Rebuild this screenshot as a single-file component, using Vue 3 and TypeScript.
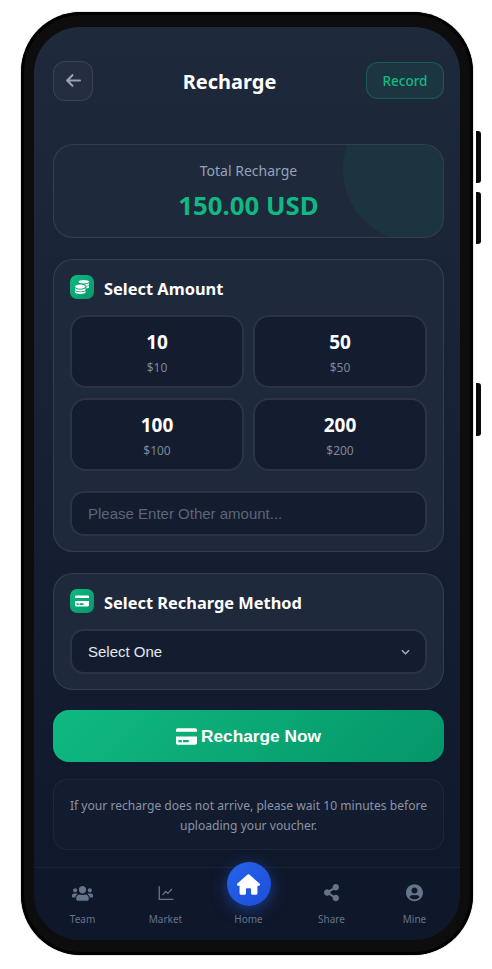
<template>
  <div class="page">
    <div class="phone">
      <span class="side side-1"></span>
      <span class="side side-2"></span>
      <span class="side side-3"></span>

      <div class="screen">
        <main class="content">
          <header class="top">
            <button class="back" type="button" aria-label="Back">
              <svg viewBox="0 0 448 512" class="back-icon"><path :d="paths.arrow" /></svg>
            </button>
            <h1 class="title">Recharge</h1>
            <button class="record" type="button">Record</button>
          </header>

          <section class="total">
            <span class="total-circle"></span>
            <div class="total-label">Total Recharge</div>
            <div class="total-value">150.00 USD</div>
          </section>

          <section class="card">
            <div class="card-head">
              <span class="badge"><svg viewBox="0 0 512 512"><path :d="paths.coins" /></svg></span>
              <h2>Select Amount</h2>
            </div>
            <div class="amounts">
              <button v-for="a in amounts" :key="a" class="amount" type="button">
                <span class="amount-num">{{ a }}</span>
                <span class="amount-usd">${{ a }}</span>
              </button>
            </div>
            <input class="field other" type="text" placeholder="Please Enter Other amount..." />
          </section>

          <section class="card method">
            <div class="card-head">
              <span class="badge"><svg viewBox="0 0 576 512"><path :d="paths.card" /></svg></span>
              <h2>Select Recharge Method</h2>
            </div>
            <div class="select-wrap">
              <select class="field select">
                <option>Select One</option>
              </select>
              <svg class="chevron" viewBox="0 0 10 6"><path d="M1 1l4 4 4-4" /></svg>
            </div>
          </section>

          <button class="submit" type="button">
            <svg viewBox="0 0 576 512"><path :d="paths.card" /></svg>
            <span>Recharge Now</span>
          </button>

          <p class="note">If your recharge does not arrive, please wait 10 minutes before uploading your voucher.</p>
        </main>

        <nav class="nav">
          <a v-for="item in nav" :key="item.label" class="nav-item" :class="{ active: item.active }">
            <span v-if="item.active" class="home-btn">
              <svg :viewBox="item.box"><path :d="item.d" /></svg>
            </span>
            <span v-else class="nav-icon">
              <svg v-if="item.d" :viewBox="item.box" :style="{ width: item.w + 'px' }"><path :d="item.d" /></svg>
              <svg v-else viewBox="0 0 24 24" class="chart">
                <path d="M3 3v17.5h19" />
                <path d="M7.5 14.5l4-4.5 3 2.5 5.5-6" />
              </svg>
            </span>
            <span class="nav-label">{{ item.label }}</span>
          </a>
        </nav>
      </div>
    </div>
  </div>
</template>

<script setup lang="ts">
const paths = {
  arrow:
    'M9.4 233.4c-12.5 12.5-12.5 32.8 0 45.3l160 160c12.5 12.5 32.8 12.5 45.3 0s12.5-32.8 0-45.3L109.2 288 416 288c17.7 0 32-14.3 32-32s-14.3-32-32-32l-306.7 0L214.6 118.6c12.5-12.5 12.5-32.8 0-45.3s-32.8-12.5-45.3 0l-160 160z',
  coins:
    'M0 405.3V448c0 35.3 86 64 192 64s192-28.7 192-64v-42.7C342.7 434.4 267.2 448 192 448S41.3 434.4 0 405.3zM320 128c106 0 192-28.7 192-64S426 0 320 0 128 28.7 128 64s86 64 192 64zM0 300.4V352c0 35.3 86 64 192 64s192-28.7 192-64v-51.6c-41.3 34-116.9 51.6-192 51.6S41.3 334.4 0 300.4zm416 11c57.3-11.1 96-31.7 96-55.4v-42.7c-23.2 16.4-57.3 27.6-96 34.5v63.6zM192 160C86 160 0 195.8 0 240s86 80 192 80 192-35.8 192-80-86-80-192-80zm219.3 56.3c60-10.8 100.7-32 100.7-56.3v-42.7c-35.5 25.1-96.5 38.6-160.7 41.8 29.5 14.3 51.2 33.5 60 57.2z',
  card:
    'M0 432c0 26.5 21.5 48 48 48h480c26.5 0 48-21.5 48-48V256H0v176zm192-68c0-6.6 5.4-12 12-12h136c6.6 0 12 5.4 12 12v40c0 6.6-5.4 12-12 12H204c-6.6 0-12-5.4-12-12v-40zm-128 0c0-6.6 5.4-12 12-12h72c6.6 0 12 5.4 12 12v40c0 6.6-5.4 12-12 12H76c-6.6 0-12-5.4-12-12v-40zM576 80v48H0V80c0-26.5 21.5-48 48-48h480c26.5 0 48 21.5 48 48z'
}

interface NavItem {
  label: string
  box: string
  d: string
  w: number
  active?: boolean
}

const amounts = [10, 50, 100, 200]

const nav: NavItem[] = [
  {
    label: 'Team',
    box: '0 0 640 512',
    w: 21,
    d: 'M96 224c35.3 0 64-28.7 64-64s-28.7-64-64-64-64 28.7-64 64 28.7 64 64 64zm448 0c35.3 0 64-28.7 64-64s-28.7-64-64-64-64 28.7-64 64 28.7 64 64 64zm32 32h-64c-17.6 0-33.5 7.1-45.1 18.6 40.3 22.1 68.9 62 75.1 109.4h66c17.7 0 32-14.3 32-32v-32c0-35.3-28.7-64-64-64zm-256 0c61.9 0 112-50.1 112-112S381.9 32 320 32 208 82.1 208 144s50.1 112 112 112zm76.8 32h-8.3c-20.8 10-43.9 16-68.5 16s-47.6-6-68.5-16h-8.3C179.6 288 128 339.6 128 403.2V432c0 26.5 21.5 48 48 48h288c26.5 0 48-21.5 48-48v-28.8c0-63.6-51.6-115.2-115.2-115.2zm-223.7-13.4C161.5 263.1 145.6 256 128 256H64c-35.3 0-64 28.7-64 64v32c0 17.7 14.3 32 32 32h65.9c6.3-47.4 34.9-87.3 75.2-109.4z'
  },
  { label: 'Market', box: '0 0 24 24', w: 18, d: '' },
  {
    label: 'Home',
    box: '0 0 576 512',
    w: 24,
    active: true,
    d: 'M575.8 255.5c0 18-15 32.1-32 32.1h-32l.7 160.2c0 2.7-.2 5.4-.5 8.1V472c0 22.1-17.9 40-40 40H456c-1.1 0-2.2 0-3.3-.1c-1.4 .1-2.8 .1-4.2 .1H416 392c-22.1 0-40-17.9-40-40V448 384c0-17.7-14.3-32-32-32H256c-17.7 0-32 14.3-32 32v64 24c0 22.1-17.9 40-40 40H160 128.1c-1.5 0-3-.1-4.5-.2c-1.2 .1-2.4 .2-3.6 .2H104c-22.1 0-40-17.9-40-40V360c0-.9 0-1.9 .1-2.8V287.6H32c-18 0-32-14-32-32.1c0-9 3-17 10-24L266.4 8c7-7 15-8 22-8s15 2 21 7L564.8 231.5c8 7 12 15 11 24z'
  },
  {
    label: 'Share',
    box: '0 0 448 512',
    w: 15,
    d: 'M352 320c-22.608 0-43.387 7.819-59.79 20.895l-102.486-64.054a96.551 96.551 0 0 0 0-41.683l102.486-64.054C308.613 184.181 329.392 192 352 192c53.019 0 96-42.981 96-96S405.019 0 352 0s-96 42.981-96 96c0 7.158.79 14.13 2.276 20.841L155.79 180.895C139.387 167.819 118.608 160 96 160c-53.019 0-96 42.981-96 96s42.981 96 96 96c22.608 0 43.387-7.819 59.79-20.895l102.486 64.054A96.301 96.301 0 0 0 256 416c0 53.019 42.981 96 96 96s96-42.981 96-96-42.981-96-96-96z'
  },
  {
    label: 'Mine',
    box: '0 0 496 512',
    w: 17,
    d: 'M248 8C111 8 0 119 0 256s111 248 248 248 248-111 248-248S385 8 248 8zm0 96c48.6 0 88 39.4 88 88s-39.4 88-88 88-88-39.4-88-88 39.4-88 88-88zm0 344c-58.7 0-111.3-26.6-146.5-68.2 18.8-35.4 55.6-59.8 98.5-59.8 2.4 0 4.8.4 7.1 1.1 13 4.2 26.6 6.9 40.9 6.9 14.3 0 28-2.7 40.9-6.9 2.3-.7 4.7-1.1 7.1-1.1 42.9 0 79.7 24.4 98.5 59.8C359.3 421.4 306.7 448 248 448z'
  }
]
</script>

<style>
html,
body {
  background: #fff;
}
</style>

<style scoped>
.page {
  width: 492px;
  height: 969px;
  padding: 12px 19px 14px 21px;
  box-sizing: border-box;
  font-family: "Noto Sans", "Open Sans", sans-serif;
  overflow: hidden;
}

.phone {
  position: relative;
  height: 943px;
  box-sizing: border-box;
  padding: 15px 13px;
  background: #0d0d0d;
  border-radius: 60px;
  box-shadow: 0 0 0 1px #e4e6ea, inset 0 0 0 3px #000;
}

.side {
  position: absolute;
  left: 455px;
  width: 5px;
  background: #0a0a0a;
  border-radius: 0 3px 3px 0;
}
.side-1 { top: 119px; height: 52px; }
.side-2 { top: 180px; height: 52px; }
.side-3 { top: 371px; height: 53px; }

.screen {
  height: 913px;
  display: flex;
  flex-direction: column;
  border-radius: 46px;
  overflow: hidden;
  background: linear-gradient(180deg, #1e293b 0%, #0f172a 100%);
}

.content {
  flex: 1;
  min-height: 0;
  padding: 34px 16px 0 19px;
}

.top {
  height: 39px;
  margin-bottom: 44px;
  display: flex;
  align-items: center;
  justify-content: space-between;
}

.back {
  width: 40px;
  height: 40px;
  padding: 0;
  display: flex;
  align-items: center;
  justify-content: center;
  background: rgba(255, 255, 255, 0.03);
  border: 1px solid rgba(255, 255, 255, 0.1);
  border-radius: 12px;
}

.back-icon {
  width: 17px;
  height: 17px;
  fill: #94a3b8;
}

.title {
  margin: 2px 0 0;
  font-size: 20px;
  line-height: 28px;
  font-weight: 700;
  color: #fff;
}

.record {
  width: 78px;
  height: 37px;
  padding: 0;
  font-family: inherit;
  font-size: 13.5px;
  font-weight: 500;
  color: #10b981;
  background: rgba(16, 185, 129, 0.1);
  border: 1px solid rgba(16, 185, 129, 0.3);
  border-radius: 12px;
}

.total {
  position: relative;
  height: 94px;
  box-sizing: border-box;
  margin-bottom: 21px;
  padding-top: 16px;
  overflow: hidden;
  text-align: center;
  background: #1e293b;
  border: 1px solid rgba(255, 255, 255, 0.1);
  border-radius: 20px;
}

.total-circle {
  position: absolute;
  top: -46px;
  left: 289px;
  width: 142px;
  height: 142px;
  border-radius: 50%;
  background: rgba(16, 185, 129, 0.08);
}

.total-label {
  position: relative;
  font-size: 14px;
  line-height: 20px;
  color: #94a3b8;
}

.total-value {
  position: relative;
  margin-top: 7px;
  font-size: 25.8px;
  line-height: 34px;
  font-weight: 700;
  color: #10b981;
}

.card {
  height: 293px;
  box-sizing: border-box;
  margin-bottom: 21px;
  padding: 15px 16px 16px;
  background: #1e293b;
  border: 1px solid rgba(255, 255, 255, 0.1);
  border-radius: 20px;
}

.card.method {
  height: 117px;
  margin-bottom: 20px;
}

.card-head {
  display: flex;
  align-items: flex-start;
  gap: 10px;
  margin-bottom: 14px;
}

.card-head h2 {
  margin: 2px 0 0;
  font-size: 16.4px;
  line-height: 24px;
  font-weight: 700;
  color: #fff;
}

.badge {
  width: 24px;
  height: 24px;
  display: flex;
  align-items: center;
  justify-content: center;
  background: linear-gradient(135deg, #10b981, #059669);
  border-radius: 7px;
}

.badge svg {
  width: 14px;
  height: 14px;
  fill: #fff;
}

.amounts {
  display: grid;
  grid-template-columns: 1fr 1fr;
  gap: 10px 9px;
  margin-bottom: 20px;
}

.amount {
  height: 73px;
  padding: 1px 0 0;
  display: flex;
  flex-direction: column;
  align-items: center;
  justify-content: center;
  font-family: inherit;
  background: #141c2f;
  border: 2px solid rgba(255, 255, 255, 0.1);
  border-radius: 16px;
}

.amount-num {
  font-size: 19px;
  line-height: 26px;
  font-weight: 700;
  color: #fff;
}

.amount-usd {
  margin-top: 5px;
  font-size: 12px;
  line-height: 16px;
  color: #7c8797;
}

.field {
  display: block;
  width: 100%;
  height: 45px;
  box-sizing: border-box;
  padding: 0 16px;
  font-family: "Liberation Sans", Arial, sans-serif;
  font-size: 15px;
  color: #e2e8f0;
  background-color: #141c2f;
  border: 2px solid rgba(255, 255, 255, 0.1);
  border-radius: 14px;
  outline: none;
  appearance: none;
}

.field::placeholder {
  color: #5b6678;
}

.select-wrap {
  position: relative;
}

.chevron {
  position: absolute;
  top: 20px;
  right: 17px;
  width: 9px;
  height: 6px;
  fill: none;
  stroke: #aab4c3;
  stroke-width: 1.5;
  pointer-events: none;
}

.submit {
  width: 100%;
  height: 52px;
  margin-bottom: 17px;
  padding: 0;
  display: flex;
  align-items: center;
  justify-content: center;
  gap: 4px;
  font-family: "Liberation Sans", Arial, sans-serif;
  font-size: 17.3px;
  font-weight: 700;
  color: #fff;
  background: linear-gradient(135deg, #10b981, #059669);
  border: 0;
  border-radius: 16px;
}

.submit svg {
  width: 21px;
  height: 21px;
  fill: #fff;
}

.note {
  height: 71px;
  box-sizing: border-box;
  margin: 0;
  padding: 16px 10px 0;
  font-size: 12.1px;
  line-height: 20px;
  text-align: center;
  color: #8a94a6;
  background: rgba(30, 41, 59, 0.2);
  border: 1px solid rgba(255, 255, 255, 0.05);
  border-radius: 14px;
}

.nav {
  height: 73px;
  box-sizing: border-box;
  padding: 0 4px 0 7px;
  display: grid;
  grid-template-columns: repeat(5, 1fr);
  background: #0f172a;
  border-top: 1px solid rgba(255, 255, 255, 0.05);
}

.nav-item {
  position: relative;
  display: flex;
  flex-direction: column;
  align-items: center;
}

.nav-icon {
  height: 24px;
  margin-top: 13px;
  display: flex;
  align-items: center;
  justify-content: center;
}

.nav-icon svg {
  display: block;
  fill: #64748b;
}

.nav-icon .chart {
  width: 18px;
  height: 18px;
  fill: none;
  stroke: #64748b;
  stroke-width: 1.8;
}

.nav-label {
  margin-top: 7px;
  font-size: 10px;
  line-height: 14px;
  color: #64748b;
}

.home-btn {
  position: absolute;
  top: -6px;
  width: 44px;
  height: 44px;
  display: flex;
  align-items: center;
  justify-content: center;
  border-radius: 50%;
  background: linear-gradient(135deg, #2563eb, #1d4ed8);
  box-shadow: 0 4px 16px rgba(37, 99, 235, 0.5);
}

.home-btn svg {
  width: 23px;
  height: 21px;
  fill: #fff;
}

.nav-item.active .nav-label {
  margin-top: 44px;
}
</style>
